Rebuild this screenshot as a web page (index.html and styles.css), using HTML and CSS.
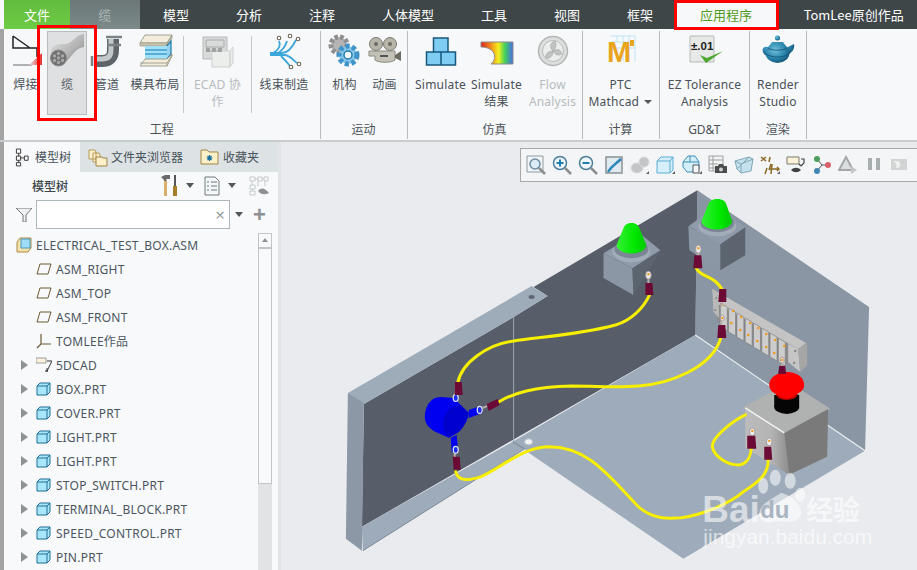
FILE: index.html
```html
<!DOCTYPE html>
<html lang="zh-CN">
<head>
<meta charset="utf-8">
<title>PTC Creo</title>
<link rel="stylesheet" href="styles.css">
</head>
<body>
<svg class="defs" width="0" height="0">
  <defs>
    <linearGradient id="gTube" x1="0" y1="0" x2="1" y2="1"><stop offset="0" stop-color="#e6e6e6"/><stop offset=".55" stop-color="#b5b5b5"/><stop offset="1" stop-color="#7d7d7d"/></linearGradient>
    <linearGradient id="gRain" x1="0" y1="0" x2="1" y2="0"><stop offset="0" stop-color="#e0201c"/><stop offset=".3" stop-color="#f28a1c"/><stop offset=".55" stop-color="#f4f01e"/><stop offset=".75" stop-color="#3fd05a"/><stop offset="1" stop-color="#4a6be8"/></linearGradient>
    <linearGradient id="gRed" x1="0" y1="0" x2="1" y2="0"><stop offset="0" stop-color="#e0e0e0"/><stop offset="1" stop-color="#e8302c"/></linearGradient>
    <linearGradient id="gBoxL" x1="0" y1="0" x2="1" y2="0"><stop offset="0" stop-color="#bcbcbc"/><stop offset=".6" stop-color="#b4b4b4"/><stop offset="1" stop-color="#8c8c8c"/></linearGradient>
    <radialGradient id="gPot" cx=".4" cy=".35" r=".7"><stop offset="0" stop-color="#6fc0dc"/><stop offset=".6" stop-color="#2a86ad"/><stop offset="1" stop-color="#124f70"/></radialGradient>
    <linearGradient id="gDome" x1="0" y1="0" x2="1" y2="0"><stop offset="0" stop-color="#35f135"/><stop offset=".6" stop-color="#00e800"/><stop offset="1" stop-color="#00c800"/></linearGradient>
    <symbol id="part" viewBox="0 0 16 16"><path class="pf" d="M1 5 4 2H14V11L11 14H1Z"/><path class="pl" d="M1 5H11V14M11 5 14 2"/></symbol>
    <symbol id="plane" viewBox="0 0 16 16"><path class="dp" d="M4 3H15L12 13H1Z"/></symbol>
    <symbol id="caret" viewBox="0 0 8 5"><path class="cr" d="M0 0H8L4 5Z"/></symbol>
  </defs>
</svg>

<div class="app">
  <nav class="menubar">
    <a class="tab tab-file">文件</a>
    <a class="tab tab-cable">缆</a>
    <a class="tab">模型</a>
    <a class="tab">分析</a>
    <a class="tab">注释</a>
    <a class="tab">人体模型</a>
    <a class="tab">工具</a>
    <a class="tab">视图</a>
    <a class="tab">框架</a>
    <a class="tab tab-active">应用程序</a>
    <a class="tab tab-last">TomLee原创作品</a>
  </nav>

  <section class="ribbon">
    <div class="group g-eng">
      <div class="items">
        <div class="item w44">
          <svg class="ic" viewBox="0 0 36 36"><path class="k" d="M5 3V15H29M5 3 22 15M29 15V24"/><path class="k2" d="M5 32H24"/><path class="weldred" d="M34 20V32H21Z"/></svg>
          <span class="lbl">焊接</span>
        </div>
        <div class="item w40 selected">
          <svg class="ic" viewBox="0 0 36 36"><path class="tube" d="M2 17C7 7 17 15 24 7 28 3 31 1 35 1V14C26 15 23 24 15 31 10 35 3 30 2 17Z"/><circle class="tubeEnd" cx="9.500" cy="25" r="8"/><g class="tubeDots"><circle cx="9.500" cy="20.500" r="1.700"/><circle cx="13.500" cy="23" r="1.700"/><circle cx="13.500" cy="27.500" r="1.700"/><circle cx="9.500" cy="29.500" r="1.700"/><circle cx="5.500" cy="27.500" r="1.700"/><circle cx="5.500" cy="23" r="1.700"/><circle cx="9.500" cy="25" r="1.700"/></g></svg>
          <span class="lbl">缆</span>
        </div>
        <div class="item w40">
          <svg class="ic" viewBox="0 0 36 36"><path class="pipeOut" d="M24 6V17Q24 28 13 28H5"/><path class="pipeIn" d="M22 6V17Q22 26 13 26H5"/><path class="flange" d="M17 4H33M18 12H32M3 23V33"/></svg>
          <span class="lbl">管道</span>
        </div>
        <div class="item w56">
          <svg class="ic" viewBox="0 0 36 36"><path class="moldTop" d="M8 2H35L30 10H3Z"/><path class="moldSide" d="M30 10H3V13H30ZM30 10 35 2V5L30 13Z"/><path class="moldBlue" d="M8 13H30V26H8Z"/><path class="moldLine" d="M8 17H30M8 21H30M30 13 34 8V21L30 26"/><path class="moldTop" d="M8 26H30L35 21V23L30 33H3Z"/><path class="moldLine2" d="M3 30H30V33M30 30 35 22"/></svg>
          <span class="lbl">模具布局</span>
        </div>
        <div class="vsep"></div>
        <div class="item w66">
          <svg class="ic" viewBox="0 0 36 36"><path class="disBack" d="M3 4H27V26H3Z"/><path class="disCube" d="M12 18H30V34H12ZM30 18 33 14V30L30 34Z"/><path class="disLine" d="M6 7H24V14H6ZM7 14V18H21V14"/><path class="disChip" d="M6 15H10V19H6ZM12 15H16V19H12ZM18 15H22V19H18Z"/></svg>
          <span class="lbl dis">ECAD 协<br>作</span>
        </div>
        <div class="vsep"></div>
        <div class="item w65">
          <svg class="ic" viewBox="0 0 36 36"><path class="har" d="M8 19C13 17 15 12 13 8M10 21C16 19 20 12 21 8M4 20H16C22 20 27 13 30 7M4 22H18C24 22 28 28 31 30M15 23C18 26 20 28 24 33"/><g class="harEnd"><circle cx="13" cy="5" r="1.800"/><circle cx="24" cy="3" r="1.800"/><circle cx="32" cy="6" r="1.800"/><circle cx="33" cy="31" r="1.800"/><circle cx="25" cy="34" r="1.800"/></g></svg>
          <span class="lbl">线束制造</span>
        </div>
      </div>
      <div class="glabel">工程</div>
    </div>

    <div class="group g-mot">
      <div class="items">
        <div class="item w48">
          <svg class="ic" viewBox="0 0 36 36"><circle class="gearG" cx="12" cy="12" r="8"/><circle class="gearB" cx="21" cy="22" r="9"/><circle class="gearC" cx="21" cy="22" r="4"/></svg>
          <span class="lbl">机构</span>
        </div>
        <div class="item w32">
          <svg class="ic" viewBox="0 0 36 36"><circle class="reel" cx="9" cy="11" r="6.500"/><circle class="reel" cx="23" cy="11" r="6.500"/><circle class="reelC" cx="9" cy="11" r="2"/><circle class="reelC" cx="23" cy="11" r="2"/><path class="camBody" d="M2 18H28V27C24 30 12 30 8 27V23H2Z"/><path class="camLens" d="M28 22 34 18V28L28 25Z"/><path class="k3" d="M13 23H21"/></svg>
          <span class="lbl">动画</span>
        </div>
      </div>
      <div class="glabel">运动</div>
    </div>

    <div class="group g-sim">
      <div class="items">
        <div class="item w66b">
          <svg class="ic" viewBox="0 0 36 36"><path class="cube" d="M10.500 5H25V19H10.500ZM3.500 19H18V32H3.500ZM18 19H32.500V32H18Z"/></svg>
          <span class="lbl">Simulate</span>
        </div>
        <div class="item w46">
          <svg class="ic" viewBox="0 0 36 36"><path class="rain" d="M2 9H34V31H12C19 25 16 14 2 14Z"/></svg>
          <span class="lbl">Simulate<br>结果</span>
        </div>
        <div class="item w66b">
          <svg class="ic" viewBox="0 0 36 36"><circle class="wheel" cx="18" cy="18" r="14.500"/><circle class="wheelIn" cx="18" cy="18" r="10.500"/><path class="blade" d="M18 18C14 14 15 10 20 8 22 12 21 15 18 18ZM18 18C23 15 26 17 27 21 23 23 20 22 18 18ZM18 18C18 23 15 26 11 25 10 21 13 18 18 18Z"/></svg>
          <span class="lbl dis">Flow<br>Analysis</span>
        </div>
      </div>
      <div class="glabel">仿真</div>
    </div>

    <div class="group g-calc">
      <div class="items">
        <div class="item w77">
          <svg class="ic" viewBox="0 0 36 36"><path class="mgrid" d="M8 3H32V28M8 9H32M8 15H32M14 3V9M20 3V28M26 3V28"/><text class="mathM" x="4" y="29">M</text><path class="mtick" d="M27 7H31V13H27Z"/></svg>
          <span class="lbl">PTC<br>Mathcad <i class="drop"></i></span>
        </div>
      </div>
      <div class="glabel">计算</div>
    </div>

    <div class="group g-gdt">
      <div class="items">
        <div class="item w90">
          <svg class="ic" viewBox="0 0 36 36"><path class="ezBox" d="M3 3H27V29H3Z"/><text class="ezT" x="4" y="17">±.01</text><path class="ezCheck" d="M13 22 19 30 36 18 20 25Z"/></svg>
          <span class="lbl">EZ Tolerance<br>Analysis</span>
        </div>
      </div>
      <div class="glabel">GD&amp;T</div>
    </div>

    <div class="group g-ren">
      <div class="items">
        <div class="item w56">
          <svg class="ic" viewBox="0 0 36 36"><circle class="pot" cx="17.500" cy="5" r="2.500"/><path class="pot" d="M12 9H23L26 13H9ZM8 14C1 12 1 21 7 23L10 18ZM26 15 34 11C35 16 33 18 28 22Z"/><ellipse class="pot" cx="17.500" cy="20" rx="12" ry="10"/><path class="potL" d="M8 15C12 18 23 18 27 15M6 21C12 25 23 25 29 21"/></svg>
          <span class="lbl">Render<br>Studio</span>
        </div>
      </div>
      <div class="glabel">渲染</div>
    </div>
  </section>

  <main class="main">
    <aside class="panel">
      <div class="ptabs">
        <div class="ptab on">
          <svg class="pic" viewBox="0 0 16 20"><path class="tr" d="M1.500 1.500H6V6H1.500ZM1.500 9H6V13.500H1.500ZM1.500 16H6V19.500H1.500ZM10 9H14V13.500H10ZM6 11H10M4 6V9M4 13.500V16"/></svg>
          <span>模型树</span>
        </div>
        <div class="ptab">
          <svg class="pic fold" viewBox="0 0 20 20"><path class="fo" d="M1 3H7L8 5V12H1ZM5 6H11L12 8V15H5Z"/><path class="fo2" d="M8 10H14L15 11H19V19H8Z"/></svg>
          <span>文件夹浏览器</span>
        </div>
        <div class="ptab">
          <svg class="pic fold" viewBox="0 0 20 20"><path class="fo2" d="M1 3H7L9 5H18V17H1Z"/><path class="star" d="M6.500 11H12.500M9.500 8V14M7.500 9 11.500 13M11.500 9 7.500 13"/></svg>
          <span>收藏夹</span>
        </div>
      </div>

      <div class="phead">
        <span class="ptitle">模型树</span>
        <svg class="hammer" viewBox="0 0 18 22"><path class="hh" d="M0 2 4 0H9V4H5.500V21H3V5Z"/><path class="ha" d="M3 6H6V21H3Z"/><path class="sd" d="M13 0H15V11H13Z"/><path class="sh" d="M12 11H16V21H12Z"/></svg>
        <svg class="car c1" viewBox="0 0 8 5"><use href="#caret"/></svg>
        <svg class="doc" viewBox="0 0 16 20"><path class="dc" d="M1 1H11L15 5V19H1ZM3 6H5M7 6H13M3 10H5M7 10H13M3 14H5M7 14H13"/></svg>
        <svg class="car c2" viewBox="0 0 8 5"><use href="#caret"/></svg>
        <svg class="hide" viewBox="0 0 20 20"><path class="hd" d="M1 1H6V5H1ZM9 1H13V5H9ZM15 1H19V5H15ZM1 9H6V13H1ZM1 15H6V19H1ZM6 3H9M13 3H15M3 5V9M3 13V15M9 5V10M16 5V10"/><path class="he" d="M9 15C12 11 16 12 20 17 16 19 12 19 9 15Z"/></svg>
      </div>

      <div class="pfilter">
        <svg class="funnel" viewBox="0 0 16 14"><path class="fn" d="M0 0H16L10 7V14H7V7Z"/></svg>
        <div class="search"><span class="x">×</span></div>
        <svg class="car c3" viewBox="0 0 8 5"><use href="#caret"/></svg>
        <span class="plus">+</span>
      </div>

      <div class="pbody">
        <ul class="tree">
          <li class="row root"><svg class="ti" viewBox="0 0 16 16"><path class="af" d="M1 5 4 1H15V11L12 15H1Z"/><path class="ab" d="M5 2H14V11H5Z"/></svg><span>ELECTRICAL_TEST_BOX.ASM</span></li>
          <li class="row"><i class="ex"></i><svg class="ti"><use href="#plane"/></svg><span>ASM_RIGHT</span></li>
          <li class="row"><i class="ex"></i><svg class="ti"><use href="#plane"/></svg><span>ASM_TOP</span></li>
          <li class="row"><i class="ex"></i><svg class="ti"><use href="#plane"/></svg><span>ASM_FRONT</span></li>
          <li class="row"><i class="ex"></i><svg class="ti" viewBox="0 0 16 16"><path class="cs" d="M5 1V11L1 15M5 11H15"/></svg><span>TOMLEE作品</span></li>
          <li class="row"><i class="ex on"></i><svg class="ti" viewBox="0 0 16 16"><path class="nt" d="M0 1H10V6H0Z"/><path class="nt2" d="M11 4H16L11 14M9 14H12M11 11V15"/></svg><span>5DCAD</span></li>
          <li class="row"><i class="ex on"></i><svg class="ti"><use href="#part"/></svg><span>BOX.PRT</span></li>
          <li class="row"><i class="ex on"></i><svg class="ti"><use href="#part"/></svg><span>COVER.PRT</span></li>
          <li class="row"><i class="ex on"></i><svg class="ti"><use href="#part"/></svg><span>LIGHT.PRT</span></li>
          <li class="row"><i class="ex on"></i><svg class="ti"><use href="#part"/></svg><span>LIGHT.PRT</span></li>
          <li class="row"><i class="ex on"></i><svg class="ti"><use href="#part"/></svg><span>STOP_SWITCH.PRT</span></li>
          <li class="row"><i class="ex on"></i><svg class="ti"><use href="#part"/></svg><span>TERMINAL_BLOCK.PRT</span></li>
          <li class="row"><i class="ex on"></i><svg class="ti"><use href="#part"/></svg><span>SPEED_CONTROL.PRT</span></li>
          <li class="row"><i class="ex on"></i><svg class="ti"><use href="#part"/></svg><span>PIN.PRT</span></li>
        </ul>
        <div class="sbar"><div class="sup"></div><div class="sthumb"></div></div>
      </div>
    </aside>

    <div class="viewport">
      <svg class="scene" viewBox="280 142 637 428">
        <!-- right wall, dark wall, floor -->
        <path class="wallR" d="M699 190 871 307 867 451 697 335Z"/>
        <path class="wallD" d="M365 404 515 317 549 296 535 287 699 190 697 335 363 527Z"/>
        <path class="floor" d="M363 527 514 442 697 335 867 451 685 559 530 453 526 449 364 551Z"/>
        <path class="rim" d="M349 393 533 286 549 296 515 317 365 404Z"/>
        <path class="end" d="M349 393 365 403 363 551 347 539Z"/>
        <path class="foldl" d="M515 317V442"/>
        <path class="foldw" d="M697 335 867 451"/>
        <path class="foldd" d="M514 442 526 449 364 551"/>
        <ellipse class="hole" cx="533" cy="297" rx="3" ry="2"/>
        <ellipse class="dimple" cx="530" cy="442" rx="4" ry="3"/>

        <!-- light 1 -->
        <path class="lTop" d="M605 253 640 232 662 250 634 268Z"/>
        <path class="lLeft" d="M605 253 634 268 635 295 605 278Z"/>
        <path class="lRight" d="M634 268 662 251 635 295Z"/>
        <ellipse class="ring2" cx="633" cy="252" rx="19" ry="10"/>
        <ellipse class="ring1" cx="633" cy="249" rx="17" ry="9"/>
        <path class="dome" d="M618 245 625 228C627 221 639 221 641 228L648 245C646 256 620 256 618 245Z"/>

        <!-- light 2 -->
        <path class="lTop" d="M690 226 718 206 747 227 722 244Z"/>
        <path class="lLeft" d="M690 226 722 244 722 270 691 250Z"/>
        <path class="lRight" d="M747 227 747 255 722 270 722 244Z"/>
        <ellipse class="ring2" cx="719" cy="226" rx="19" ry="10"/>
        <ellipse class="ring1" cx="719" cy="223" rx="17" ry="9"/>
        <path class="dome" d="M703 221 710 204C712 197 726 197 728 204L734 221C732 232 705 232 703 221Z"/>

        <!-- terminal block -->
        <path class="tbGap" d="M716 298 790 343 790 365 720 322Z"/>
        <path class="tbTop" d="M714 289 808 343 800 349 716 302Z"/>
        <path class="tbEnd" d="M790 344 800 349 802 372 790 362Z"/>
        <path class="tbSide" d="M800 349 809 343 809 365 802 372Z"/>
        <path class="tbEndL" d="M714 289 720 293 721 318 715 312Z"/>
        <g class="tbTeeth">
          <path d="M722 303 729 307V331L722 327Z"/>
          <path d="M730.300 308 737.300 312V336L730.300 332Z"/>
          <path d="M738.600 313 745.600 317V341L738.600 337Z"/>
          <path d="M746.900 318 753.900 322V346L746.900 342Z"/>
          <path d="M755.200 323 762.200 327V351L755.200 347Z"/>
          <path d="M763.500 328 770.500 332V356L763.500 352Z"/>
          <path d="M771.800 333 778.800 337V361L771.800 357Z"/>
          <path d="M780.100 338 787.100 342V366L780.100 362Z"/>
        </g>
        <g class="tbDots">
          <circle cx="724" cy="305" r="1.300"/><circle cx="735" cy="311" r="1.300"/><circle cx="743" cy="317" r="1.300"/><circle cx="752" cy="323" r="1.300"/><circle cx="760" cy="328" r="1.300"/><circle cx="768" cy="334" r="1.300"/><circle cx="777" cy="340" r="1.300"/><circle cx="786" cy="346" r="1.300"/>
          <circle cx="724" cy="318" r="1.300"/><circle cx="733" cy="323" r="1.300"/><circle cx="742" cy="330" r="1.300"/><circle cx="750" cy="335" r="1.300"/><circle cx="759" cy="341" r="1.300"/><circle cx="768" cy="347" r="1.300"/><circle cx="776" cy="353" r="1.300"/><circle cx="784" cy="358" r="1.300"/>
        </g>
        <g class="tbHoles"><circle cx="797" cy="351" r="1.300"/><circle cx="796" cy="363" r="1.300"/><circle cx="718" cy="298" r="1.100"/><circle cx="717" cy="310" r="1.100"/></g>

        <!-- stop switch box -->
        <path class="bxTop" d="M747 408 791 384 830 409 786 433Z"/>
        <path class="bxLeft" d="M747 408 786 433 791 475 747 448Z"/>
        <path class="bxRight" d="M786 433 830 409 829 457 791 475Z"/>
        <path class="bxEdge" d="M747 408 786 433"/>
        <ellipse class="blk" cx="788.500" cy="407" rx="12.500" ry="7"/>
        <path class="blkB" d="M776 395H801V407H776Z"/>
        <ellipse class="redD" cx="788.500" cy="394" rx="11" ry="6"/>
        <path class="red" d="M771 385C771 377 780 372 789 372 798 372 806 377 806 385 806 392 799 393 796 396 790 400 785 399 781 396 777 393 771 392 771 385Z"/>

        <!-- wires -->
        <g class="wire">
          <path d="M459 383C463 362 490 344 515 341 540 337 580 335 617 325 633 320 645 308 651 295"/>
          <path d="M500 402C515 393 535 387 573 386 600 386 615 388 640 386 670 384 715 368 723 336"/>
          <path d="M457 472C460 483 472 480 482 477 503 468 522 448 550 447 590 447 610 476 640 507 655 520 670 519 683 518 705 515 732 503 745 492 760 482 771 475 770 458"/>
          <path d="M698 268C702 278 717 274 725 292"/>
          <path d="M747 415C733 422 713 438 714 447 716 457 730 466 742 465 750 463 753 455 753 447"/>
        </g>

        <!-- motor -->
        <path class="mBack" d="M470 410 482 406 484 413 470 418ZM452 438 458 435 459 447 453 453Z"/>
        <path class="mBack" d="M442 397C431 397 426 408 426 417 426 424 431 429 437 432L450 438 460 432C465 427 469 420 470 413L455 398Z"/>
        <path class="mDark" d="M453 407C445 413 442 423 446 433L450 438 460 432C465 427 469 420 470 413L462 405Z"/>

        <!-- lugs -->
        <g class="lugNeck"><path d="M650 278V284M700 252V257M754 435V440M771 445V450M457 401V383M484 408 489 406M456 454V458M724 306V290M723 322V326M784 360V367"/></g>
        <g class="lugM">
          <ellipse cx="457" cy="398" rx="2.500" ry="3.500"/><ellipse cx="481" cy="410" rx="2.500" ry="3.500"/><ellipse cx="457" cy="450" rx="2.500" ry="3.500"/>
        </g>
        <g class="lug">
          <ellipse cx="650" cy="275" rx="2.800" ry="4"/><ellipse cx="700" cy="249" rx="2.800" ry="4"/><ellipse cx="754" cy="432" rx="2.800" ry="4"/><ellipse cx="771" cy="442" rx="2.800" ry="4"/><ellipse cx="724" cy="318" rx="2" ry="3"/><ellipse cx="784" cy="360" rx="2" ry="3"/>
        </g>
        <g class="lugDot"><circle cx="650" cy="274" r="1.200"/><circle cx="700" cy="248" r="1.200"/><circle cx="754" cy="431" r="1.200"/><circle cx="771" cy="441" r="1.200"/><circle cx="724" cy="318" r="1.200"/><circle cx="784" cy="360" r="1.200"/></g>
        <g class="term">
          <path d="M456 382H463L464 395H456Z"/>
          <path d="M488 404 499 399 501 405 490 411Z"/>
          <path d="M454 457H461L462 470H455Z"/>
          <path d="M647 283H654L655 295H647Z"/>
          <path d="M696 255H703L704 268H695Z"/>
          <path d="M721 289H728L728 302H720Z"/>
          <path d="M720 325H727L728 338H719Z"/>
          <path d="M749 436H757L758 449H749Z"/>
          <path d="M766 447H773L774 460H766Z"/>
          <path d="M781 366H787L788 374H780Z"/>
        </g>

        <!-- watermark -->
        <g class="paw">
          <ellipse cx="765" cy="486" rx="5" ry="8"/><ellipse cx="777" cy="478" rx="5.500" ry="8"/><ellipse cx="792" cy="481" rx="5.500" ry="8"/><ellipse cx="802" cy="495" rx="5" ry="7"/>
          <path d="M783 493C797 497 803 507 803 514 800 525 785 522 780 521 768 524 761 523 761 513 763 503 773 500 783 493Z"/>
        </g>
        <text class="wmBig" x="704" y="522">Bai</text>
        <text class="wmDu" x="762" y="518">du</text>
        <text class="wmCn" x="808" y="520">经验</text>
        <text class="wmUrl" x="705" y="544">jingyan.baidu.com</text>
      </svg>

      <div class="vtools">
        <svg class="vi" viewBox="0 0 20 20"><path class="vBox" d="M1 1H17V17H1Z"/><circle class="vMag" cx="9" cy="9" r="5"/><path class="vHan" d="M13 13 19 19"/></svg>
        <svg class="vi" viewBox="0 0 20 20"><circle class="vMagB" cx="8" cy="8" r="6.500"/><path class="vPm" d="M4.500 8H11.500M8 4.500V11.500"/><path class="vHan" d="M13 13 19 19"/></svg>
        <svg class="vi" viewBox="0 0 20 20"><circle class="vMagB" cx="8" cy="8" r="6.500"/><path class="vPm" d="M4.500 8H11.500"/><path class="vHan" d="M13 13 19 19"/></svg>
        <svg class="vi" viewBox="0 0 20 20"><path class="vRef" d="M2 2H18V18H2Z"/><path class="vSlash" d="M4 17C8 10 12 9 17 4"/></svg>
        <svg class="vi" viewBox="0 0 20 20"><ellipse class="vBlob" cx="7" cy="13" rx="6" ry="5"/><ellipse class="vBlob" cx="14" cy="7" rx="5" ry="5"/><path class="vMini" d="M16 19H19V16Z"/></svg>
        <svg class="vi" viewBox="0 0 20 20"><path class="vCube" d="M1 6 5 2H17V15L14 18H1ZM1 6H14V18M14 6 17 2"/><path class="vMini" d="M16 19H19V16Z"/></svg>
        <svg class="vi" viewBox="0 0 20 20"><path class="vCube2" d="M1 7 6 1H13L17 7V14L14 17H5L1 12ZM1 7H17M8 1V7"/><path class="vDoc" d="M11 10H17V18H11Z"/><path class="vMini" d="M17 19H20V16Z"/></svg>
        <svg class="vi" viewBox="0 0 20 20"><path class="vTab" d="M1 1H15V16H1ZM1 5H15M1 9H10M1 13H8M5 1V16"/><path class="vCam" d="M7 11H10L11 9H15L16 11H19V18H7Z"/><circle class="vLens" cx="13" cy="14.500" r="2"/></svg>
        <svg class="vi" viewBox="0 0 20 20"><path class="vGlass" d="M1 6 15 2 19 4 17 16 7 18 3 14Z"/><path class="vGlL" d="M1 6 7 9 19 4M7 9V18M3 14 15 2"/></svg>
        <svg class="vi" viewBox="0 0 20 20"><path class="vOr" d="M1 2 6 6M6 2 1 6M10 2 9 7M7 13 5 19M11 9 9 15M12 9 11 19M9 14H19M17 12 19 14 17 16"/><path class="vMini" d="M17 19H20V16Z"/></svg>
        <svg class="vi" viewBox="0 0 20 20"><path class="vNote" d="M1 2H13V9H1Z"/><path class="vBk" d="M15 4H18V8M18 8 15 11M15 11 13 9"/><path class="vEye" d="M5 15C8 12 12 12 15 15 12 18 8 18 5 15Z"/></svg>
        <svg class="vi" viewBox="0 0 20 20"><path class="vLn" d="M5 4 10 10 5 16M10 10H16"/><circle class="vG" cx="5" cy="4" r="3"/><circle class="vR" cx="16" cy="10" r="3"/><circle class="vB" cx="5" cy="16" r="3"/></svg>
        <svg class="vi" viewBox="0 0 20 20"><path class="vTri" d="M8 2 15 15H1Z"/><path class="vPlay" d="M13 11 19 15 13 19Z"/></svg>
        <svg class="vi" viewBox="0 0 20 20"><path class="vPs" d="M4 3H8V15H4ZM12 3H16V15H12Z"/></svg>
        <svg class="vi" viewBox="0 0 20 20"><path class="vLast" d="M1 4H17V15H1Z"/><path class="vLast2" d="M3 6H8C11 7 11 12 8 13H6C7 10 6 8 3 6Z"/></svg>
      </div>
    </div>
  </main>

  <div class="mark mark-cable"></div>
  <div class="mark mark-tab"></div>
</div>
</body>
</html>
```

FILE: styles.css
```css
* { box-sizing: border-box; }
html, body { margin: 0; padding: 0; }
body { font-family: "Noto Sans", "Noto Sans CJK SC", sans-serif; font-size: 12px; color: #3f4a52; overflow: hidden; }
.defs { position: absolute; }
.app { position: relative; width: 917px; height: 570px; overflow: hidden; display: flex; flex-direction: column; background: #f7f8fa; }

/* menu */
.menubar { height: 29px; flex: none; display: flex; background: #3e4648; margin-left: 4px; }
.tab { padding: 0 23.5px; font-size: 13px; line-height: 29px; color: #fff; white-space: nowrap; font-family: "Noto Sans CJK SC", "Noto Sans", sans-serif; }
.tab-file { width: 66px; padding: 0; text-align: center; background: linear-gradient(#62bb3e, #6dcc45); }
.tab-cable { width: 69.5px; padding: 0; text-align: center; background: linear-gradient(#6b7677, #7c8a8a); color: #aeb8b8; }
.tab-active { background: #f7f8fa; color: #4f9a22; }
.tab-last { padding: 0 0 0 28px; }

/* ribbon */
.ribbon { height: 113px; flex: none; display: flex; padding-left: 4px; padding-top: 2px; background: #f7f8fa; border-bottom: 2px solid #c9cdcd; box-shadow: inset 4px 0 0 #a3a3a3; }
.group { display: flex; flex-direction: column; border-right: 1px solid #b7bbbb; height: 108px; }
.g-eng { width: 316.500px; } .g-mot { width: 87px; } .g-sim { width: 175px; } .g-calc { width: 77px; } .g-gdt { width: 90.500px; } .g-ren { width: 56.500px; }
.items { height: 88px; display: flex; }
.glabel { text-align: center; line-height: 18px; font-size: 12px; color: #4b5358; padding-top: 2px; }
.item { display: flex; flex-direction: column; align-items: center; text-align: center; height: 84px; flex: none; }
.w32 { width: 32px; } .w40 { width: 40px; } .w44 { width: 43px; } .w46 { width: 46px; } .w48 { width: 48px; } .w56 { width: 56px; } .w65 { width: 64px; } .w66 { width: 67px; } .w66b { width: 66px; } .w77 { width: 76px; } .w90 { width: 90px; }
.ic { width: 36px; height: 36px; margin-top: 2px; margin-bottom: 7px; flex: none; overflow: visible; }
.lbl { line-height: 17px; font-size: 12px; color: #4a5258; white-space: nowrap; letter-spacing: .2px; }
.dis { color: #b6bbbe; }
.selected { background: #dfe0e2; border: 1px solid #b9bcbd; }
.selected .ic { margin-top: 1px; }
.selected .lbl { color: #5a6166; }
.vsep { width: 1px; height: 77px; margin-top: 5px; background: #c6c9c9; flex: none; }
.drop { display: inline-block; width: 0; height: 0; border: 4px solid transparent; border-top: 4px solid #555; border-bottom: 0; vertical-align: 2px; margin-left: 2px; }

/* ribbon icons */
.k { fill: none; stroke: #222; stroke-width: 1.500; }
.k2 { fill: none; stroke: #9a9a9a; stroke-width: 1.500; }
.weldred { fill: url(#gRed); }
.tube { fill: url(#gTube); }
.tubeEnd { fill: #6f6f6f; stroke: #8c8c8c; }
.tubeDots { fill: #a8a8a8; }
.pipeOut { fill: none; stroke: #5f666a; stroke-width: 12; }
.pipeIn { fill: none; stroke: #c3c8ca; stroke-width: 5; }
.flange { fill: none; stroke: #7b8286; stroke-width: 2.500; }
.moldTop { fill: #f3eddb; stroke: #8d8d7d; stroke-width: .8; }
.moldSide { fill: #c9c3ae; stroke: #8d8d7d; stroke-width: .6; }
.moldBlue { fill: #9fe0fa; }
.moldLine { fill: #55b7e6; fill-opacity: .6; stroke: #1779ac; stroke-width: 1.200; }
.moldLine2 { fill: none; stroke: #8d8d7d; stroke-width: .8; }
.disBack { fill: #d8dbda; stroke: #b5b9b8; }
.disCube { fill: #eceeec; stroke: #cfd2d0; }
.disLine { fill: none; stroke: #a6abaa; }
.disChip { fill: #9fa4a3; }
.har { fill: none; stroke: #3aa6d9; stroke-width: 1.800; }
.harEnd { fill: #fff; stroke: #6d6552; stroke-width: 1.100; }
.gearG { fill: #b4b4b4; stroke: #8f8f8f; stroke-width: 5; stroke-dasharray: 3.500 2; }
.gearB { fill: #86c7ea; stroke: #3f93c9; stroke-width: 5; stroke-dasharray: 4 2.600; }
.gearC { fill: #f5f8fa; stroke: #2479ad; stroke-width: 1.500; }
.reel { fill: #b7b5a9; stroke: #7c7a70; }
.reelC { fill: #6e6c62; }
.camBody { fill: #c4c2b6; stroke: #8b897f; }
.camLens { fill: #6d6b62; }
.k3 { fill: none; stroke: #555; stroke-width: 2; }
.cube { fill: #80cdf3; stroke: #14587e; stroke-width: 1.500; }
.rain { fill: url(#gRain); stroke: #8a8a8a; }
.wheel { fill: #dcdedd; stroke: #b5b8b7; stroke-width: 1.500; }
.wheelIn { fill: #eceeed; stroke: #b9bcbb; }
.blade { fill: #bfc2c1; stroke: #a2a5a4; stroke-width: .6; }
.mgrid { fill: none; stroke: #bfe2f4; }
.mathM { font-family: "Liberation Sans", sans-serif; font-weight: 700; font-size: 29px; fill: #e8a41c; }
.mtick { fill: #e8a41c; }
.ezBox { fill: #e6e9e6; stroke: #b6bab6; }
.ezT { font-family: "Liberation Sans", sans-serif; font-weight: 700; font-size: 11.500px; fill: #222; }
.ezCheck { fill: #4ca62f; }
.pot { fill: url(#gPot); }
.potL { fill: none; stroke: #124f70; stroke-width: .8; }

/* main */
.main { flex: 1; min-height: 0; display: flex; }
.panel { width: 278px; flex: none; border-left: 4px solid #a3a3a3; background: #f7f9fb; display: flex; flex-direction: column; }
.ptabs { height: 30px; flex: none; display: flex; background: #dde2e4; }
.ptab { display: flex; align-items: center; height: 30px; color: #47525a; white-space: nowrap; padding-right: 9px; flex: none; }
.ptab.on { width: 76px; background: #f7f9fb; padding: 0 0 0 11px; }
.pic { width: 15px; height: 20px; margin-right: 5px; flex: none; }
.pic.fold { width: 20px; margin-left: 8px; margin-right: 3px; }
.tr { fill: #fff; stroke: #333; stroke-width: 1; }
.fo { fill: #fbf0c8; stroke: #b59a56; }
.fo2 { fill: #fbf0c8; stroke: #a08442; }
.star { fill: none; stroke: #1d6f9e; stroke-width: 1.200; }

.phead { height: 27px; flex: none; position: relative; display: flex; align-items: center; padding-left: 28px; }
.ptitle { font-weight: 500; color: #3d4549; width: 129px; }
.hammer { width: 18px; height: 22px; flex: none; }
.hh { fill: #6b6b6b; } .ha { fill: #d9b06a; } .sd { fill: #555; } .sh { fill: #a87d2a; }
.car { width: 8px; height: 5px; flex: none; }
.cr { fill: #50585c; }
.c1 { margin-left: 7px; }
.doc { width: 16px; height: 20px; margin-left: 10px; flex: none; }
.dc { fill: #f4f6f7; stroke: #6f7a80; }
.c2 { margin-left: 8px; }
.hide { width: 20px; height: 20px; margin-left: 13px; flex: none; }
.hd { fill: none; stroke: #c6cacb; }
.he { fill: #8d9295; }

.pfilter { height: 31px; flex: none; display: flex; align-items: center; padding-left: 12px; }
.funnel { width: 16px; height: 14px; flex: none; margin-right: 4px; }
.fn { fill: #eef0f1; stroke: #70777a; }
.search { width: 194px; height: 29px; background: #fff; border: 1px solid #aeb8bc; display: flex; align-items: center; justify-content: flex-end; padding-right: 4px; }
.x { font-size: 17px; line-height: 20px; color: #9a9fa2; }
.c3 { margin-left: 5px; }
.plus { margin-left: 10px; font-size: 22px; line-height: 20px; font-weight: 700; color: #8b9194; font-family: "Liberation Sans", sans-serif; }

.pbody { flex: 1; min-height: 0; display: flex; padding-top: 3px; }
.tree { list-style: none; margin: 0; padding: 0 0 0 12px; width: 254px; flex: none; overflow: hidden; }
.row { height: 24px; display: flex; align-items: center; color: #4c565e; white-space: nowrap; letter-spacing: .25px; }
.ex { width: 20px; flex: none; height: 10px; }
.ex.on { position: relative; }
.ex.on::before { content: ""; position: absolute; left: 5px; top: 0; border: 5px solid transparent; border-left: 7px solid #8d9295; border-right: 0; }
.ti { width: 16px; height: 16px; margin-right: 4px; flex: none; }
.pf { fill: #a9e6fb; stroke: #1f6f96; stroke-width: 1; }
.pl { fill: none; stroke: #1f6f96; stroke-width: 1; }
.dp { fill: none; stroke: #6d5a35; stroke-width: 1; }
.cs { fill: none; stroke: #6d5a35; stroke-width: 1.200; }
.af { fill: #f2e2a8; stroke: #a98a45; }
.ab { fill: #9fdcf6; stroke: #4a9ac2; }
.nt { fill: #fdf1dc; stroke: #888; stroke-width: .8; }
.nt2 { fill: none; stroke: #333; stroke-width: 1; }

.sbar { width: 14px; flex: none; background: #e1e3e5; }
.sup { height: 15px; background: #f7f9fb; border: 1px solid #c3c6c7; position: relative; }
.sup::after { content: ""; position: absolute; left: 3px; top: 4px; border: 3.500px solid transparent; border-bottom: 4px solid #8d9295; border-top: 0; }
.sthumb { height: 236px; background: #f7f9fb; border: 1px solid #c3c6c7; }

/* viewport */
.viewport { flex: 1; min-width: 0; position: relative; background: #e9ebef; border-left: 3px solid #e2e4e6; }
.scene { display: block; width: 636px; height: 428px; margin-left: -2px; }
.vtools { position: absolute; top: 6px; right: 0; width: 397px; height: 34px; background: #f4f5f7; border: 1px solid #a8a8a8; border-right: 0; display: flex; align-items: center; gap: 6px; padding-left: 5px; }
.vi { width: 20px; height: 20px; flex: none; }
.vBox { fill: #f2f5f7; stroke: #8f9aa1; }
.vMag { fill: #dcecf6; stroke: #6f8b9e; stroke-width: 1.500; }
.vHan { fill: none; stroke: #8e8e8e; stroke-width: 2.500; }
.vMagB { fill: #eef6fb; stroke: #4e7f99; stroke-width: 1.500; }
.vPm { fill: none; stroke: #1f7fae; stroke-width: 2; }
.vRef { fill: #dfeaf0; stroke: #8a9194; stroke-width: 1.500; }
.vSlash { fill: none; stroke: #2d87b8; stroke-width: 2.500; }
.vBlob { fill: #c3c5c7; stroke: #d8dadb; }
.vMini { fill: #5b5f62; }
.vCube { fill: #d6effa; stroke: #5aaed3; }
.vCube2 { fill: #d4eefa; stroke: #3d8fb6; }
.vDoc { fill: #f4f6f7; stroke: #50585c; }
.vTab { fill: #f1f2f2; stroke: #9ea2a3; }
.vCam { fill: #4a4c4d; }
.vLens { fill: #d1d3d3; }
.vGlass { fill: #b8dcea; fill-opacity: .8; stroke: #83a7b7; }
.vGlL { fill: none; stroke: #83a7b7; }
.vOr { fill: none; stroke: #8a6a25; stroke-width: 1.500; }
.vNote { fill: #fbf2d8; stroke: #7b7b70; }
.vBk { fill: none; stroke: #444; stroke-width: 1.200; }
.vEye { fill: #3f4244; }
.vLn { fill: none; stroke: #555; }
.vG { fill: #4e9f5f; } .vR { fill: #d9606a; } .vB { fill: #4187b4; }
.vTri { fill: #dcdfdf; stroke: #a3a7a8; stroke-width: 2; }
.vPlay { fill: #c2c6c7; }
.vPs { fill: #a9aeb0; }
.vLast { fill: #d2d4d4; }
.vLast2 { fill: #eeefef; }

/* scene */
.wallR { fill: #8a96a4; }
.wallD { fill: #575e69; }
.floor { fill: #9dabba; }
.rim { fill: #9eacba; }
.end { fill: #8c98a6; }
.foldl { fill: none; stroke: #9aa5b2; stroke-width: 1; }
.foldw { fill: none; stroke: #e8ecf0; stroke-width: 1.200; }
.foldd { fill: none; stroke: #6f7b88; stroke-width: .8; }
.hole { fill: #5d6570; }
.dimple { fill: #f2f2f2; stroke: #b9c2cc; }
.lTop { fill: #8f9baa; }
.lLeft { fill: #8b97a5; }
.lRight { fill: #5c6470; }
.ring2 { fill: #a2acb8; }
.ring1 { fill: #7a8694; }
.dome { fill: url(#gDome); }
.tbGap { fill: #8b8b8b; }
.tbTop { fill: #c4c4c4; }
.tbEnd { fill: #c6c6c6; }
.tbSide { fill: #a6a6a6; }
.tbEndL { fill: #b9b9b9; }
.tbTeeth path { fill: #cdcdcd; stroke: #777; stroke-width: .6; }
.tbDots { fill: #f09a20; }
.tbHoles { fill: #8c8c8c; }
.bxTop { fill: #b0b1b1; stroke: #b0b1b1; stroke-width: 3; stroke-linejoin: round; }
.bxLeft { fill: url(#gBoxL); }
.bxRight { fill: #7a7a7a; }
.bxEdge { fill: none; stroke: #f2f2f2; stroke-width: 1.500; }
.blk, .blkB { fill: #050505; }
.redD { fill: #b80000; }
.red { fill: #ff0000; }
.wire path { fill: none; stroke: #f7ef00; stroke-width: 3; stroke-linecap: round; }
.mBack { fill: #0000f0; }
.mDark { fill: #0000cf; }
.lug { fill: #e8eaee; stroke: #9d8f8a; stroke-width: .8; }
.lugM { fill: #1c2cf0; stroke: #e4e8f0; stroke-width: 1.200; }
.lugDot { fill: #f09a20; }
.lugNeck path { fill: none; stroke: #b9b0ac; stroke-width: 2; }
.term path { fill: #6a0a35; }
.paw { fill: #fff; fill-opacity: .55; }
.wmBig { font-family: "Liberation Sans", sans-serif; font-size: 37px; font-weight: 700; fill: #fff; fill-opacity: .6; }
.wmDu { font-family: "Liberation Sans", sans-serif; font-size: 24px; font-weight: 700; fill: #aab5c2; }
.wmCn { font-family: "Noto Sans CJK SC", sans-serif; font-size: 27px; font-weight: 700; fill: #fff; fill-opacity: .65; }
.wmUrl { font-family: "Liberation Sans", sans-serif; font-size: 21px; fill: #fff; fill-opacity: .65; }

/* annotation frames */
.mark { position: absolute; border: 3px solid #ff0000; pointer-events: none; }
.mark-cable { left: 37px; top: 25px; width: 60px; height: 96px; }
.mark-tab { left: 674px; top: 0; width: 105px; height: 30px; }
```
